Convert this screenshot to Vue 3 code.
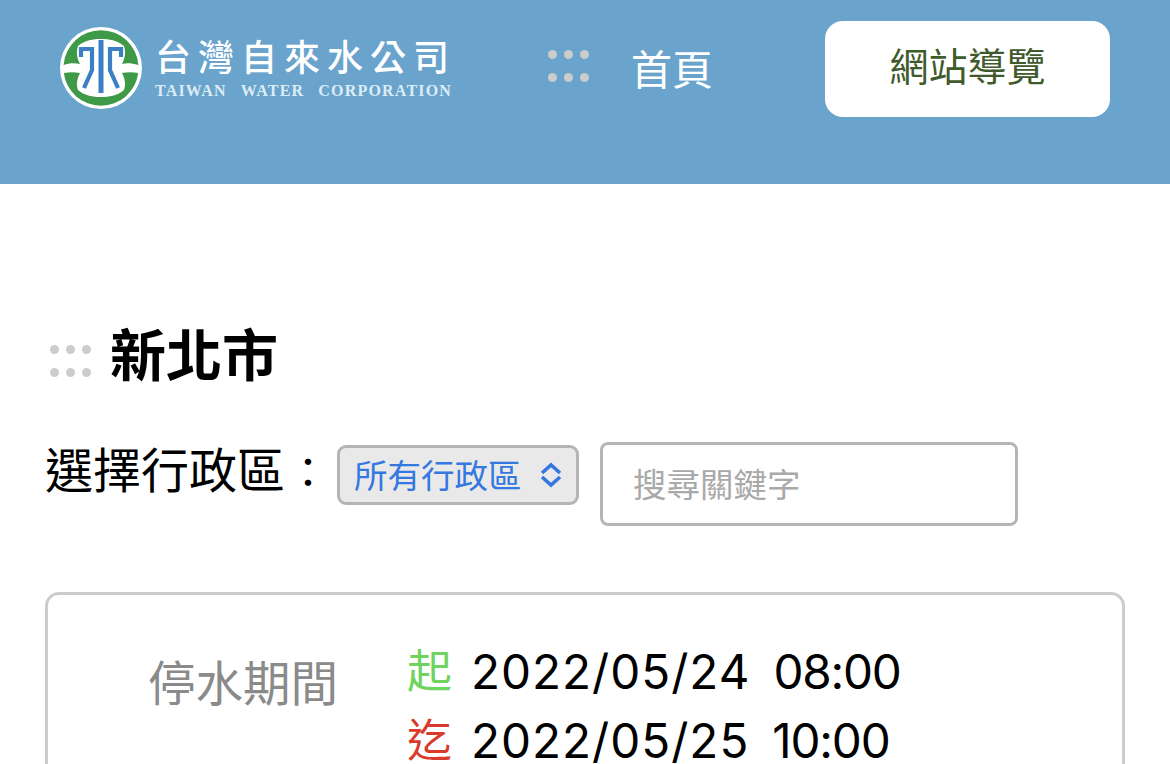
<template>
  <div class="page" lang="zh-TW">
    <header class="top">
      <div class="logo">
        <svg class="logo-mark" width="84" height="84" viewBox="0 0 84 84">
          <circle cx="42" cy="42" r="41" fill="#fff" />
          <!-- 上下綠色弧塊 -->
          <path d="M4.6 39 A37.5 37.5 0 0 1 79.4 39 C72 37 68 37 63 38 C66 32 67 27 65 20 C58 14 50 13 42 13 C34 13 26 14 19 20 C17 27 18 32 21 38 C16 37 10 37 4.6 39 Z" fill="#3f9a48" />
          <path d="M4.8 47 C10 46 16 46 21 47 C18 53 17 58 19 64 C26 70 34 71 42 71 C50 71 58 70 65 64 C67 58 66 53 63 47 C68 46 74 46 79.2 47 A37.5 37.5 0 0 1 4.8 47 Z" fill="#3f9a48" />
          <!-- 中間藍色水字 -->
          <g fill="none" stroke="#3b80c4" stroke-width="4.2">
            <path d="M42 14 V67" stroke-width="5" />
            <path d="M22 31 V23 H33 V44 L25 62" />
            <path d="M62 31 V23 H51 V44 L59 62" />
          </g>
        </svg>
        <div class="logo-text">
          <div class="logo-zh">台灣自來水公司</div>
          <div class="logo-en">TAIWAN<span>WATER</span><span>CORPORATION</span></div>
        </div>
      </div>
      <nav class="nav">
        <div class="dots dots-nav"><i v-for="n in 6" :key="n"></i></div>
        <a class="home">首頁</a>
      </nav>
      <button class="guide">網站導覽</button>
    </header>

    <main class="content">
      <div class="title-row">
        <div class="dots dots-title"><i v-for="n in 6" :key="n"></i></div>
        <h1>新北市</h1>
      </div>

      <div class="filter-row">
        <label>選擇行政區<span class="colon">：</span></label>
        <div class="select">
          <span>所有行政區</span>
          <svg width="22" height="26" viewBox="0 0 22 26" fill="none" stroke="#3478e0" stroke-width="3.6">
            <path d="M2 11 L11 3 L20 11" />
            <path d="M2 15 L11 23 L20 15" />
          </svg>
        </div>
        <input class="search" placeholder="搜尋關鍵字" />
      </div>

      <section class="card">
        <div class="card-label">停水期間</div>
        <div class="period">
          <div v-for="p in periods" :key="p.tag" class="period-line">
            <span class="tag" :class="p.cls">{{ p.tag }}</span>
            <span class="date">{{ p.date }}</span>
            <span class="time">{{ p.time }}</span>
          </div>
        </div>
      </section>
    </main>
  </div>
</template>

<script setup>
const periods = [
  { tag: '起', cls: 'start', date: '2022/05/24', time: '08:00' },
  { tag: '迄', cls: 'end', date: '2022/05/25', time: '10:00' },
]
</script>

<style>
html, body { margin: 0; overflow: hidden; }
</style>

<style scoped>
.page {
  height: 100vh;
  overflow: hidden;
  background: #fff;
  font-family: "Noto Sans CJK TC", "Liberation Sans", sans-serif;
  color: #000;
}
.top {
  height: 184px;
  box-sizing: border-box;
  background: #6aa4cd;
  display: flex;
  align-items: flex-start;
  padding: 21px 60px 0 59px;
}
.logo {
  display: flex;
  align-items: center;
  gap: 12px;
  width: 489px;
  height: 94px;
}
.logo-mark { flex: none; margin-top: -1px; filter: blur(0.5px); }
.logo-text { margin-top: -1px; }
.logo-zh {
  font-size: 36px;
  font-weight: 500;
  line-height: 40px;
  letter-spacing: 7px;
  color: #fff;
  white-space: nowrap;
}
.logo-en {
  font-family: "Liberation Serif", serif;
  font-weight: 700;
  font-size: 16px;
  letter-spacing: 1.2px;
  line-height: 18px;
  margin-top: 7px;
  color: #dcecf5;
  white-space: nowrap;
}
.logo-en span { margin-left: 14px; }
.dots {
  display: grid;
  grid-template-columns: repeat(3, 9px);
  justify-content: space-between;
  row-gap: 14px;
}
.dots i {
  width: 9px;
  height: 9px;
  border-radius: 50%;
  background: #cccccc;
}
.nav {
  display: flex;
  align-items: center;
  height: 96px;
  width: 277px;
}
.dots-nav { width: 41px; margin-top: -7px; }
.home {
  margin-left: 42px;
  font-size: 41px;
  line-height: 50px;
  margin-top: -4px;
  color: #fff;
}
.guide {
  width: 285px;
  height: 96px;
  border: 0;
  border-radius: 18px;
  background: #fff;
  color: #3f5a2b;
  font-family: inherit;
  font-size: 39px;
  padding: 0 0 10px;
}
.content { padding: 0 45px; }
.title-row {
  display: flex;
  align-items: center;
  margin-top: 133px;
  height: 70px;
}
.dots-title { width: 41px; margin: 18px 19px 0 5px; }
h1 {
  margin: 0;
  font-size: 56px;
  line-height: 70px;
  font-weight: 700;
}
.filter-row {
  display: flex;
  align-items: flex-start;
  margin-top: 53px;
}
.filter-row label {
  font-size: 48px;
  line-height: 54px;
  width: 292px;
  white-space: nowrap;
}
.colon { font-size: 42px; margin-left: 2px; }
.select {
  width: 242px;
  height: 60px;
  box-sizing: border-box;
  margin-top: 5px;
  border: 3px solid #b5b5b5;
  border-radius: 9px;
  background: #e9e9ea;
  color: #3478e0;
  font-size: 33.5px;
  line-height: 54px;
  display: flex;
  align-items: center;
  justify-content: space-between;
  padding: 0 14px 2px;
}
.select svg { flex: none; margin: 2px 0 0; }
.search {
  width: 418px;
  height: 84px;
  box-sizing: border-box;
  margin: 2px 0 0 21px;
  border: 3px solid #b5b5b5;
  border-radius: 8px;
  padding: 0 30px 4px;
  font-family: inherit;
  font-size: 33.5px;
  outline: none;
}
.search::placeholder { color: #a9a9a9; }
.card {
  margin-top: 66px;
  height: 400px;
  box-sizing: border-box;
  border: 3px solid #cccccc;
  border-radius: 14px;
  padding: 39px 0 0 100px;
  display: flex;
  align-items: flex-start;
}
.card-label {
  width: 259px;
  font-size: 47.5px;
  line-height: 70px;
  margin-top: 12px;
  color: #8a8a8a;
}
.period-line {
  display: flex;
  align-items: center;
  height: 69px;
}
.tag { font-size: 45px; width: 64px; }
.start { color: #6fd35f; }
.end { color: #d93a2b; }
.date, .time {
  font-family: Inter, "Liberation Sans", sans-serif;
  font-size: 47.6px;
  margin-top: 6px;
  white-space: pre;
}
.date { letter-spacing: 1px; }
.time { letter-spacing: -1.2px; margin-left: 23px; }
</style>
